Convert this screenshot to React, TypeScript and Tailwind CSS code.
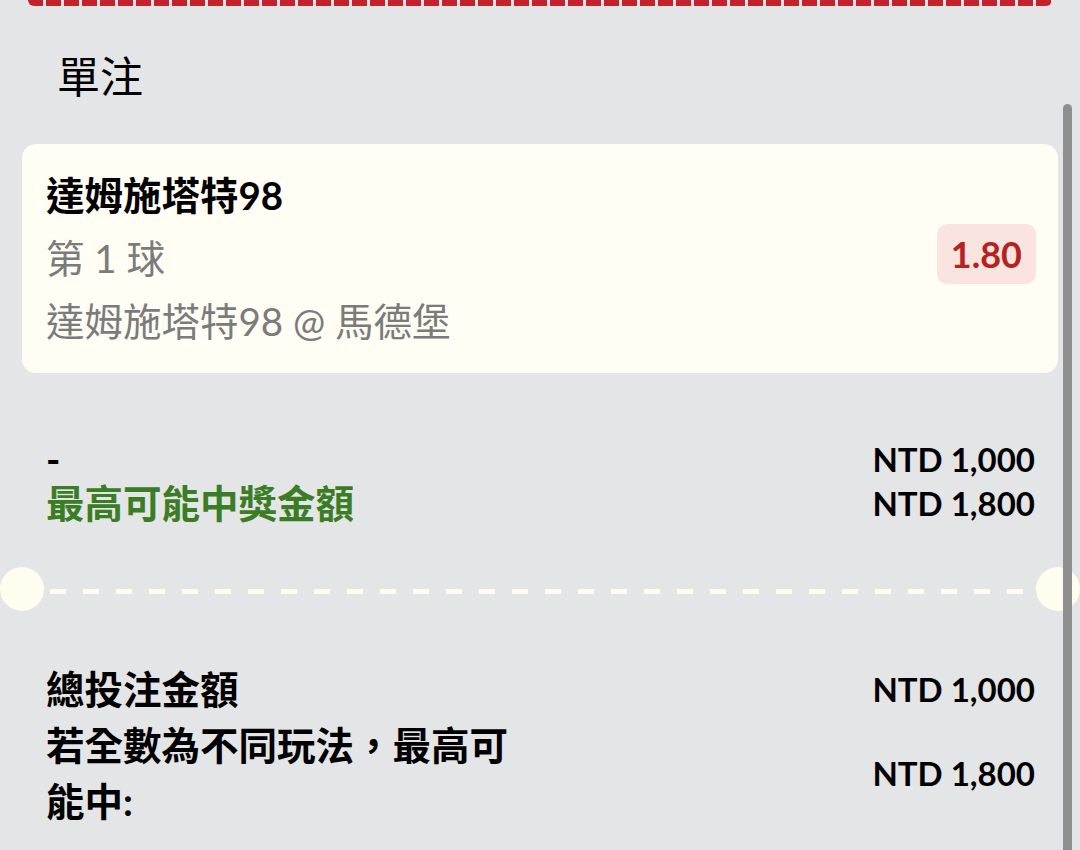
import React from 'react'

const font = { fontFamily: '"Lato", "Noto Sans CJK TC", sans-serif' }

// Single bet slip summary
const App: React.FC = () => {
  return (
    <div className="relative h-[850px] overflow-hidden bg-[#e4e5e7] text-black" style={font}>
      {/* bottom edge of previous dashed box */}
      <div className="mx-[28px] h-[6px] rounded-b-[12px] bg-[repeating-linear-gradient(90deg,#c4222a_0_15px,transparent_15px_18px)]"></div>

      <div className="pl-[57px] pt-[43px] text-[43px] leading-[56px]">單注</div>

      {/* selection card */}
      <div className="mx-[22px] mt-[39px] flex items-center rounded-[14px] bg-[#fffdf4] pb-[20px] pl-[24px] pr-[22px] pt-[20px]">
        <div className="flex-1 text-[38.5px] leading-[63px]">
          <div className="font-bold">達姆施塔特98</div>
          <div className="text-[#7b7b7b]">第 1 球</div>
          <div className="text-[#7b7b7b]">達姆施塔特98 @ 馬德堡</div>
        </div>
        <div className="mb-[10px] rounded-[10px] bg-[#f9e4df] px-[14px] text-[36px] font-bold leading-[60px] text-[#b5221f]">1.80</div>
      </div>

      {/* stake / payout */}
      <div className="mt-[64px] pl-[46px] pr-[45px] text-[38.5px] leading-[44px]">
        <div className="flex items-center justify-between">
          <span className="font-bold">-</span>
          <span className="text-[33px] font-bold">NTD 1,000</span>
        </div>
        <div className="flex items-center justify-between">
          <span className="font-bold text-[#3b7d24]">最高可能中獎金額</span>
          <span className="text-[33px] font-bold">NTD 1,800</span>
        </div>
      </div>

      {/* ticket divider */}
      <div className="mt-[42px] flex h-[44px] items-center">
        <div className="h-[44px] w-[44px] rounded-full bg-[#fffdf0]"></div>
        <div className="mx-[6px] mt-[4px] h-[5px] flex-1 bg-[repeating-linear-gradient(90deg,#fffdf0_0_16px,transparent_16px_33px)]"></div>
        <div className="h-[44px] w-[44px] rounded-full bg-[#fffdf0]"></div>
      </div>

      {/* totals */}
      <div className="mt-[50px] pl-[46px] pr-[45px] text-[38.5px] font-bold leading-[56px]">
        <div className="flex items-center justify-between">
          <span>總投注金額</span>
          <span className="text-[33px]">NTD 1,000</span>
        </div>
        <div className="flex items-center justify-between">
          <span className="w-[480px]">若全數為不同玩法，最高可能中:</span>
          <span className="text-[33px]">NTD 1,800</span>
        </div>
      </div>

      {/* scrollbar */}
      <div className="absolute bottom-0 right-[8px] top-[104px] w-[9px] rounded-t-full bg-[#8f8f8f]"></div>
    </div>
  )
}

export default App
